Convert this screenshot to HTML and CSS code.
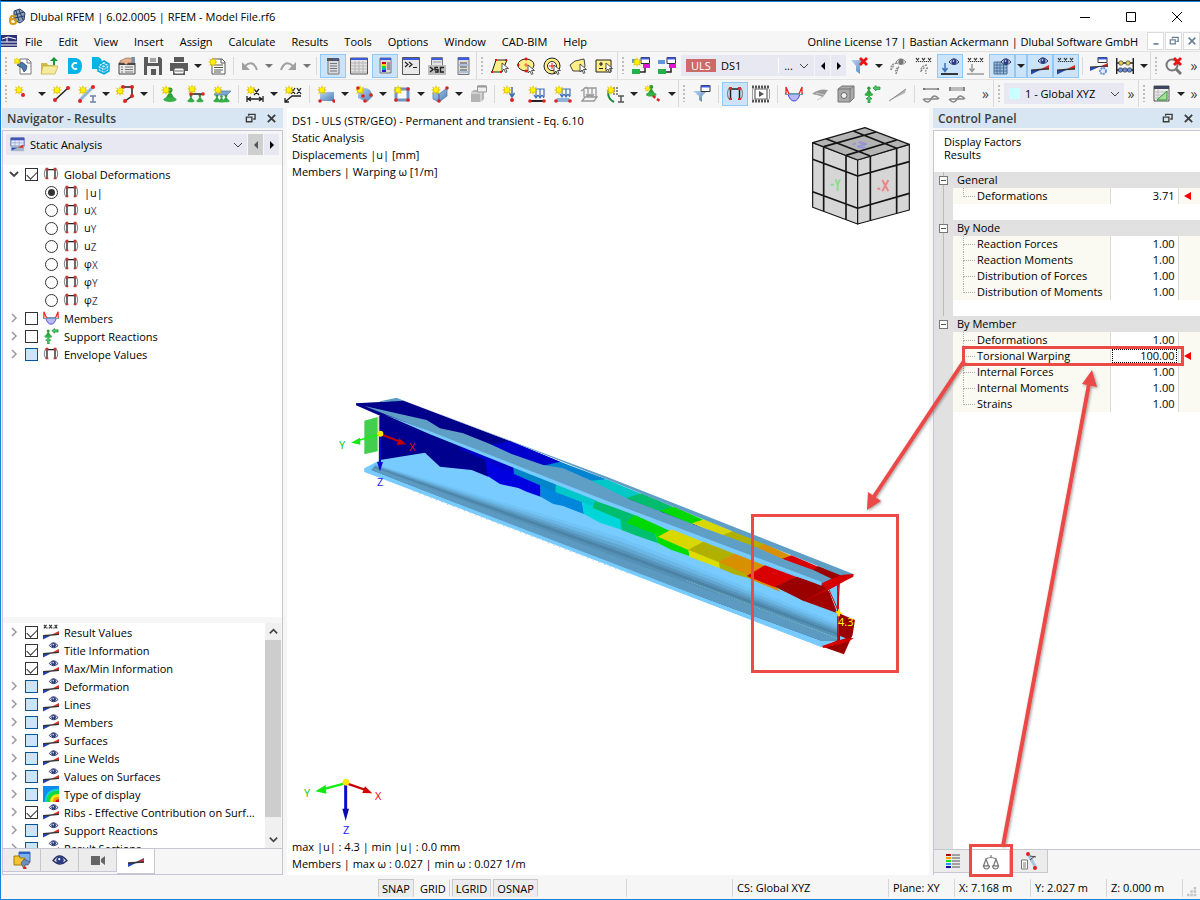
FILE: index.html
```html
<!DOCTYPE html>
<html lang="en">
<head>
    <meta charset="UTF-8">
    <meta name="viewport" content="width=device-width, initial-scale=1.0">
    <title>Dlubal RFEM | 6.02.0005 | RFEM - Model File.rf6</title>
    <link rel="stylesheet" href="styles.css">
</head>
<body>
    <!-- Icon sprite -->
    <svg class="sprite" aria-hidden="true">
        <defs>
            <linearGradient id="steel" x1="0" y1="0" x2="1" y2="1"><stop offset="0" stop-color="#b9d4f0"/><stop offset="1" stop-color="#4f7fb5"/></linearGradient>
            <g id="star"><path d="M5 0l1 3 3-1.500-1.500 2.500 2.500 1-2.500 1 1.500 3-3-1.500-1 2.500-1-2.500-3 1.500 1.500-3-2.500-1 2.500-1-1.500-2.500 3 1.500z" fill="#e2c100"/><circle cx="5" cy="5" r="2.400" fill="#fff200"/></g>
            <g id="cursor"><path d="M0 0v8l2-2 1.500 3.500 1.500-.7-1.500-3.300h3z" fill="#fff" stroke="#444" stroke-width=".9"/></g>
            <g id="eye"><path d="M0 4q4.500-6.500 10 0q-5 5-10 0z" fill="#dde1f2" stroke="#26305e" stroke-width="1"/><circle cx="5" cy="3.700" r="2.600" fill="#2a3a86"/><circle cx="4.500" cy="3" r=".8" fill="#fff"/></g>
            <g id="eyegray"><path d="M0 4q4.500-6.500 10 0q-5 5-10 0z" fill="#eee" stroke="#888" stroke-width="1"/><circle cx="5" cy="3.700" r="2.600" fill="#777"/></g>
            <g id="wedge"><path d="M0 13h9L0 17.500z" fill="#2446b8"/><path d="M9 12.500l9-4.500v4.500z" fill="#d93020"/><path d="M0 13.200l18-1.500" stroke="#333" stroke-width="1.500"/></g>
            <g id="xxx"><path d="M1 1l3 4M4 1l-3 4M7 1l3 4M10 1l-3 4M13 1l3 4M16 1l-3 4M5.500 4v1M11.500 4v1" stroke="#333" stroke-width="1.200"/></g>
            <g id="cone"><circle cx="9" cy="5" r="2.600" fill="#2f9d3c"/><path d="M9 6l5 8H4z" fill="#2f9d3c"/><ellipse cx="9" cy="14.500" rx="6.500" ry="2.500" fill="#37b048"/></g>
            <g id="redx"><path d="M0 0l7 7M7 0l-7 7" stroke="#ee1111" stroke-width="2.800"/></g>

            <symbol id="i-app" viewBox="0 0 18 18"><path d="M6 3l6-2 5 4-1 7-4 3-6-3z" fill="#8ba0bd" stroke="#273a5c"/><path d="M8 3l3 10M11 2l4 10M7 7l9-3M7 10l9-2" stroke="#273a5c"/><path d="M7 8H4q-2 1-2 5 0 3 3 3t3-2.500-3-2.500q-2 0-2.500 1.500" fill="none" stroke="#d79a10" stroke-width="2"/></symbol>
            <symbol id="i-mdi" viewBox="0 0 16 12"><path d="M0 0h16v12H0z" fill="#2c3177"/><path d="M0 7h16M1 4l6-2 8 2M6 2v5M0 10h16" stroke="#fff" fill="none" stroke-width="1"/></symbol>
            <symbol id="i-new" viewBox="0 0 18 18"><path d="M6 2h8l3 3v12H6z" fill="#fff" stroke="#777"/><path d="M13 2v4h4" fill="none" stroke="#777"/><path d="M3 8l5-3 5 4-1 4-2 2-2-4z" fill="#4c7aab" stroke="#1f3d63" stroke-width=".7"/><use href="#star" transform="translate(-1 0) scale(.8)"/></symbol>
            <symbol id="i-open" viewBox="0 0 18 18"><path d="M1 17V6h6l1 2h7v9z" fill="#d2bc48"/><path d="M1 17l2-8h15l-3 8z" fill="#f5eb9f" stroke="#c2ac42" stroke-width=".7"/><path d="M14 0l4 4h-3v4h-2V4h-3z" fill="#179a38"/></symbol>
            <symbol id="i-c" viewBox="0 0 18 18"><path d="M2 1h8q6 1 6 8t-6 8H2z" fill="#06b4e6"/><path d="M11 6.500A3 3 0 1 0 11 11.500" fill="none" stroke="#fff" stroke-width="1.800"/></symbol>
            <symbol id="i-c3" viewBox="0 0 18 18"><path d="M0 0h6q4 1 4 5v7H0z" fill="#06b4e6"/><path d="M12 4l5 3v7l-5 3-6-3V8z" fill="#c9f0fb" stroke="#06a8dc" stroke-width="1.500"/><path d="M6 8l6 3 5-4M12 11v6M8 6l6 3v7M9 16V9l6-3M6 11l6 3 5-3" stroke="#06a8dc" fill="none"/></symbol>
            <symbol id="i-props" viewBox="0 0 18 18"><path d="M1 6h16v11H1z" fill="#e8e8e8" stroke="#444"/><path d="M1 6h16v2H1z" fill="#444"/><path d="M3 10h2M7 10h8M3 12.500h2M7 12.500h8M3 15h2M7 15h8" stroke="#777"/><path d="M2 4l6-3 4 0 3 2-2 3-3 0-2 2-2-2-4 0z" fill="#e7b18f" stroke="#8a5a3a" stroke-width=".6"/><path d="M13 0h4v6h-3z" fill="#7b91ad"/></symbol>
            <symbol id="i-save" viewBox="0 0 18 18"><path d="M0 0h16l2 2v16H0z" fill="#5a5a5a"/><path d="M4 0h10v6H4z" fill="#f0f0f0"/><path d="M6 2h6M6 4h6" stroke="#5a5a5a"/><path d="M3 9h12v9H3z" fill="#f0f0f0"/><path d="M7 12h5v6H7z" fill="#5a5a5a"/></symbol>
            <symbol id="i-print" viewBox="0 0 18 18"><path d="M4 0h10v5H4zM0 6h18v8h-3v4H3v-4H0z" fill="#5a5a5a"/><path d="M3 5.500h12M5 12h8v4H5z" stroke="#fff" fill="#eee"/><path d="M5 14h8" stroke="#777"/></symbol>
            <symbol id="i-report" viewBox="0 0 18 18"><path d="M4 2h10l3 3v12H4z" fill="#fff" stroke="#555"/><path d="M13 2v4h4M6 8h9M6 10.500h9M6 13h9M6 15h7" stroke="#555" fill="none"/><use href="#star"/></symbol>
            <symbol id="i-undo" viewBox="0 0 18 18"><path d="M4 9Q12 2 16 13" fill="none" stroke="#a0a0a0" stroke-width="2"/><path d="M1 5v8h8z" fill="#a0a0a0"/></symbol>
            <symbol id="i-redo" viewBox="0 0 18 18"><path d="M14 9Q6 2 2 13" fill="none" stroke="#a0a0a0" stroke-width="2"/><path d="M17 5v8H9z" fill="#a0a0a0"/></symbol>
            <symbol id="i-nav" viewBox="0 0 18 18"><path d="M4 2h11v15H4z" fill="#d9dbe2" stroke="#777"/><path d="M3 1h12v3H3z" fill="#555"/><path d="M9 2h5" stroke="#3b5be0"/><path d="M6 6.500h7M6 9h7M6 11.500h7M6 14h7" stroke="#777"/></symbol>
            <symbol id="i-table" viewBox="0 0 18 18"><path d="M.5 1h17v16H.5z" fill="#e4e4e4" stroke="#555"/><path d="M1 1h16v2H1z" fill="#3b5be0"/><path d="M1 6h16M1 9h16M1 12h16M1 15h16M5 4v13M9 4v13M13 4v13" stroke="#b5b5b5"/></symbol>
            <symbol id="i-panel" viewBox="0 0 18 18"><path d="M4 1h11v15H4z" fill="#d9d9d9" stroke="#777"/><path d="M4 1h11v2H4z" fill="#3b5be0"/><path d="M6 5h4v2H6z" fill="#c00"/><path d="M6 7h4v2H6z" fill="#f2d200"/><path d="M6 9h4v2H6z" fill="#1d3"/><path d="M6 11h4v2H6z" fill="#0ad"/><path d="M6 13h4v2H6z" fill="#22b"/><path d="M11 6h3M11 8h3M11 10h3M11 12h3" stroke="#555"/></symbol>
            <symbol id="i-console" viewBox="0 0 18 18"><path d="M.5 .5h17v17H.5z" fill="#e9e9e9" stroke="#555"/><path d="M1 1h16v2H1z" fill="#3b5be0"/><path d="M3 5l3 2.500L3 10M7 5l3 2.500L7 10M11 10.500h4" fill="none" stroke="#222" stroke-width="1.200"/></symbol>
            <symbol id="i-script" viewBox="0 0 18 18"><path d="M3.500 .5h11v9h-11z" fill="#e4e4e4" stroke="#777"/><path d="M4 1h10v2H4z" fill="#3b5be0"/><path d="M5 5h8" stroke="#999"/><path d="M0 8h18v10H0z" fill="#bdbdbd"/><path d="M2 10l3 2.500L2 15M10 10.500H7v2.200h3V15H7M16 10.500h-3.500V15H16" fill="none" stroke="#222" stroke-width="1.400"/></symbol>
            <symbol id="i-list" viewBox="0 0 18 18"><path d="M4 .5h11v17H4z" fill="#ddd" stroke="#777"/><path d="M4 .5h11v2.500H4z" fill="#3b5be0"/><path d="M6 6h7M6 10h7M6 13h7" stroke="#444"/><path d="M5 7.500h9v1H5zM5 14.500h9v1H5z" fill="#7fa7d8"/></symbol>
            <symbol id="i-selrh" viewBox="0 0 18 18"><path d="M5 3h11l-5 12H1z" fill="#ffee83" stroke="#222"/><path d="M4 2h2v2H4zM14 2h2v2h-2zM0 14h2v2H0zM9 14h2v2H9z" fill="#e11"/><use href="#cursor" transform="translate(11 6)"/></symbol>
            <symbol id="i-selel" viewBox="0 0 18 18"><ellipse cx="9" cy="8" rx="8" ry="6" fill="#ffee83" stroke="#222"/><path d="M8 1h2v2H8zM0 7h2v2H0zM8 13h2v2H8zM9 6v4M7 8h4" fill="#e11" stroke="#e11" stroke-width=".6"/><use href="#cursor" transform="translate(11 8)"/></symbol>
            <symbol id="i-selring" viewBox="0 0 18 18"><circle cx="9" cy="9" r="8" fill="#ffee83" stroke="#222"/><circle cx="9" cy="9" r="4.500" fill="#fff" stroke="#222"/><path d="M9 6v6M6 9h6" stroke="#e11"/><use href="#cursor" transform="translate(11 8)"/></symbol>
            <symbol id="i-selpoly" viewBox="0 0 18 18"><path d="M1 8l5-4 9-2 1 7-2 5-10 0z" fill="#ffee83" stroke="#444"/><use href="#cursor" transform="translate(11 7)"/></symbol>
            <symbol id="i-selnum" viewBox="0 0 18 18"><path d="M1 3h15v12H1z" fill="#ffee83" stroke="#222"/><path d="M4 7h4M6 5v4M4 11.500h4M10 11.500h3" stroke="#222" stroke-width="1.200"/><use href="#cursor" transform="translate(11 6)"/></symbol>
            <symbol id="i-lcnew" viewBox="0 0 18 18"><path d="M9 .5h8.500v6H9z" fill="#fff" stroke="#333"/><path d="M9 .5h8.500v2H9z" fill="#3b5be0"/><path d="M11 7h7v4h-7z" fill="#e214d6"/><path d="M0 12h8v5H0z" fill="#22b24a"/><path d="M8 15h5v-4" fill="none" stroke="#222" stroke-width="1.500"/><path d="M0 2h6v4H0z" fill="#5f95e0"/><use href="#star"/></symbol>
            <symbol id="i-lc" viewBox="0 0 18 18"><path d="M0 3h7v4H0z" fill="#5f95e0"/><path d="M9 .5h8.500v6H9z" fill="#fff" stroke="#333"/><path d="M9 .5h8.500v2H9z" fill="#3b5be0"/><path d="M11 7h7v4h-7z" fill="#e214d6"/><path d="M0 12h8v5H0z" fill="#22b24a"/><path d="M8 15h5v-4" fill="none" stroke="#222" stroke-width="1.500"/></symbol>
            <symbol id="i-filterx" viewBox="0 0 18 18"><path d="M0 3h14l-5 6v8l-4-3V9z" fill="url(#steel)"/><use href="#redx" transform="translate(9 1)"/></symbol>
            <symbol id="i-arceye" viewBox="0 0 18 18"><path d="M8 6q-7 1-6 7M9 11q-3 0-2 6M2 13l3-5M7 17l3-8" stroke="#888" fill="none" stroke-width="1.300" stroke-dasharray="2 1"/><use href="#eyegray" transform="translate(7 1)"/></symbol>
            <symbol id="i-arcx" viewBox="0 0 18 18"><use href="#xxx"/><path d="M12 8q-7 1-6 7M13 11q-3 0-2 6M6 14l4-4" stroke="#888" fill="none" stroke-width="1.300" stroke-dasharray="2 1"/></symbol>
            <symbol id="i-loadeye" viewBox="0 0 18 18"><path d="M0 17h17" stroke="#222" stroke-width="1.800"/><path d="M4 6v8M1.500 11L4 14.500 6.500 11" stroke="#3e70b5" stroke-width="1.500" fill="none"/><use href="#eye" transform="translate(8 1)"/></symbol>
            <symbol id="i-loadx" viewBox="0 0 18 18"><use href="#xxx"/><path d="M0 17h17M5 7v7M2.500 11.500L5 14.500l2.500-3" stroke="#999" stroke-width="1.500" fill="none"/></symbol>
            <symbol id="i-grideye" viewBox="0 0 18 18"><path d="M1 5h13v12H1z" fill="#9dbfe0" stroke="#4a6f99"/><path d="M1 8h13M1 11h13M1 14h13M4 5v12M7 5v12M10.500 5v12" stroke="#4a6f99"/><use href="#eye" transform="translate(8 1)"/></symbol>
            <symbol id="i-reseye" viewBox="0 0 18 18"><use href="#wedge"/><use href="#eye" transform="translate(7 0)"/></symbol>
            <symbol id="i-resx" viewBox="0 0 18 18"><use href="#wedge"/><use href="#xxx"/></symbol>
            <symbol id="i-resgear" viewBox="0 0 18 18"><path d="M8 .5h9v5H8z" fill="#fff" stroke="#333"/><path d="M8 .5h9v2H8z" fill="#3b5be0"/><path d="M0 10h9l-9 4z" fill="#2446b8"/><path d="M9 10l9-4v4z" fill="#d93020"/><path d="M0 10l18-1" stroke="#333"/><circle cx="13" cy="14" r="3" fill="#e4ecfb" stroke="#6a8fda" stroke-width="2" stroke-dasharray="2 .8"/></symbol>
            <symbol id="i-abacus" viewBox="0 0 18 18"><path d="M.7 1v16M17.300 1v16M0 6h18M0 13h18" stroke="#222" stroke-width="1.500"/><circle cx="5" cy="6" r="2.200" fill="#e8cf56" stroke="#444" stroke-width=".7"/><circle cx="12" cy="6" r="2.200" fill="#e8cf56" stroke="#444" stroke-width=".7"/><circle cx="4.500" cy="13" r="2.200" fill="#6b90d8" stroke="#334" stroke-width=".7"/><circle cx="9" cy="13" r="2.200" fill="#6b90d8" stroke="#334" stroke-width=".7"/><circle cx="13.500" cy="13" r="2.200" fill="#6b90d8" stroke="#334" stroke-width=".7"/></symbol>
            <symbol id="i-zoomx" viewBox="0 0 18 18"><circle cx="7" cy="8" r="5.500" fill="none" stroke="#777" stroke-width="2"/><path d="M11 12l5 5" stroke="#777" stroke-width="3"/><use href="#redx" transform="translate(9 1)"/></symbol>

            <symbol id="i-node" viewBox="0 0 18 18"><use href="#star"/><circle cx="9" cy="10" r="2" fill="#d22"/></symbol>
            <symbol id="i-line" viewBox="0 0 18 18"><path d="M3 15L16 3" stroke="#222" stroke-width="1.500"/><circle cx="3" cy="15" r="2" fill="#d22"/><circle cx="16" cy="3" r="2" fill="#d22"/><use href="#star"/></symbol>
            <symbol id="i-member" viewBox="0 0 18 18"><path d="M2 15L15 2" stroke="#8fb4da" stroke-width="3"/><circle cx="2" cy="16" r="2" fill="#d22"/><circle cx="15" cy="2" r="2" fill="#d22"/><path d="M12 11h6M12 17h6M15 11v6" stroke="#6d83a8" stroke-width="1.500"/><use href="#star"/></symbol>
            <symbol id="i-poly" viewBox="0 0 18 18"><path d="M4 4l0 4M6 2h10v9l-7 5" fill="none" stroke="#222" stroke-width="1.500"/><circle cx="7" cy="2" r="2" fill="#d22"/><circle cx="16" cy="2" r="2" fill="#d22"/><circle cx="16" cy="11" r="2" fill="#d22"/><circle cx="9" cy="16" r="2" fill="#d22"/><use href="#star" transform="translate(-1 1)"/></symbol>
            <symbol id="i-nsup" viewBox="0 0 18 18"><use href="#cone"/><use href="#star"/></symbol>
            <symbol id="i-lsup" viewBox="0 0 18 18"><use href="#cone" transform="translate(-1 8) scale(.55)"/><use href="#cone" transform="translate(8 8) scale(.55)"/><path d="M3 9h13" stroke="#222" stroke-width="1.500"/><circle cx="4" cy="9" r="1.800" fill="#d22"/><circle cx="16" cy="9" r="1.800" fill="#d22"/><use href="#star" transform="translate(0 -1)"/></symbol>
            <symbol id="i-ssup" viewBox="0 0 18 18"><use href="#cone" transform="translate(-1 8) scale(.55)"/><use href="#cone" transform="translate(8 8) scale(.55)"/><use href="#cone" transform="translate(4 9) scale(.5)"/><path d="M4 6h14l-4 4H1z" fill="#7aa6d4" stroke="#4a78a9" stroke-width=".7"/><use href="#star"/></symbol>
            <symbol id="i-dim" viewBox="0 0 18 18"><path d="M1 11v6M17 11v6M2 14h14M5 12l-3 2 3 2M13 12l3 2-3 2M8 4l5 6M13 4l-5 6" fill="none" stroke="#222" stroke-width="1.300"/><use href="#star"/></symbol>
            <symbol id="i-dimxx" viewBox="0 0 18 18"><path d="M17 11H8l-7 6M1 13v4h4M7 3l4 6M11 3L7 9M13 3l4 6M17 3l-4 6" fill="none" stroke="#222" stroke-width="1.300"/><use href="#star"/></symbol>
            <symbol id="i-surf" viewBox="0 0 18 18"><path d="M3 7h14v9H3z" fill="url(#steel)"/><circle cx="3" cy="16" r="1.800" fill="#d22"/><circle cx="17" cy="16" r="1.800" fill="#d22"/><use href="#star"/></symbol>
            <symbol id="i-surf4" viewBox="0 0 18 18"><path d="M3 8q5-8 12-3l3 6-6 6-9-4z" fill="url(#steel)"/><use href="#star"/><circle cx="3" cy="3" r="1.800" fill="#d22"/><circle cx="16" cy="10" r="1.800" fill="#d22"/><circle cx="8" cy="11" r="1.800" fill="#d22"/><circle cx="10" cy="16" r="1.800" fill="#d22"/></symbol>
            <symbol id="i-opening" viewBox="0 0 18 18"><path d="M3 4h12v11H3z" fill="#fff" stroke="#7095c4" stroke-width="3"/><circle cx="3" cy="15" r="1.800" fill="#d22"/><circle cx="15" cy="15" r="1.800" fill="#d22"/><circle cx="15" cy="4" r="1.800" fill="#d22"/><use href="#star"/></symbol>
            <symbol id="i-solid" viewBox="0 0 18 18"><path d="M2 7l6 2v8l-6-3zM8 9l8-6v8l-8 6z" fill="url(#steel)" stroke="#48719f" stroke-width=".7"/><circle cx="16" cy="3" r="1.800" fill="#d22"/><circle cx="8" cy="16" r="1.800" fill="#d22"/><use href="#star"/></symbol>
            <symbol id="i-box" viewBox="0 0 18 18"><path d="M2 7l3-2h10v9l-3 3H2z" fill="#b4b4b4"/><path d="M2 8h10v9M12 8l3-3" fill="none" stroke="#eee"/><path d="M8.500 1h9v6h-9z" fill="#eee" stroke="#999"/><path d="M9 1.500h8" stroke="#999" stroke-width="2"/></symbol>
            <symbol id="i-nload" viewBox="0 0 18 18"><path d="M10 2v9M7.500 8l2.500 4 2.500-4" fill="none" stroke="#3e70b5" stroke-width="1.500"/><circle cx="10" cy="15" r="2" fill="#d22"/><use href="#star"/></symbol>
            <symbol id="i-mload" viewBox="0 0 18 18"><path d="M5 4h11v8M8 4v8M12 4v8M6 10l2 3 2-3M10 10l2 3 2-3M14 10l2 3" fill="none" stroke="#3e70b5" stroke-width="1.200"/><path d="M1 16h16" stroke="#222" stroke-width="2"/><circle cx="2" cy="16" r="1.800" fill="#d22"/><circle cx="16" cy="16" r="1.800" fill="#d22"/><use href="#star"/></symbol>
            <symbol id="i-sload" viewBox="0 0 18 18"><path d="M3 13h12l2 4H1z" fill="#8fb4da"/><path d="M5 4h11v7M8 4v7M12 4v7M6 9l2 3 2-3M10 9l2 3 2-3M14 9l2 3" fill="none" stroke="#3e70b5" stroke-width="1.200"/><circle cx="2" cy="16" r="1.800" fill="#d22"/><circle cx="16" cy="16" r="1.800" fill="#d22"/><use href="#star"/></symbol>
            <symbol id="i-gload" viewBox="0 0 18 18"><path d="M4 3h12v9M8 3v9M12 3v9M2 16l3-4h12l-3 4zM4 3v9M6 9l2 3 2-3M10 9l2 3 2-3M1 6l6-4" fill="none" stroke="#999" stroke-width="1.300"/></symbol>
            <symbol id="i-imp" viewBox="0 0 18 18"><path d="M3 4q-3 9 5 13" fill="none" stroke="#1c8a3a" stroke-width="2"/><path d="M8 2v9M11 2v9" stroke="#222" stroke-dasharray="2 1"/><path d="M12 11h6M12 17h6M15 11v6" stroke="#555" stroke-width="1.500"/><use href="#star"/></symbol>
            <symbol id="i-rsup" viewBox="0 0 18 18"><use href="#cone" transform="translate(0 -2) scale(.8)"/><path d="M9 11l8 6" stroke="#d22" stroke-width="2.500" stroke-dasharray="3 2"/><use href="#star" transform="scale(.7)"/></symbol>
            <symbol id="i-filterw" viewBox="0 0 18 18"><path d="M0 6h14l-5 5v6l-3-2v-4z" fill="url(#steel)"/><path d="M8 .5h9v6H8z" fill="#fff" stroke="#333"/><path d="M8 .5h9v2H8z" fill="#3b5be0"/></symbol>
            <symbol id="i-deform" viewBox="0 0 18 18"><path d="M4.500 14V4h9v10" fill="none" stroke="#222" stroke-width="1.500"/><path d="M3 3Q0 9 3 14M15 3Q18 9 15 14" fill="none" stroke="#888" stroke-width="1.200"/><path d="M3 2h3v3H3zM12 2h3v3h-3zM3 13h3v2H3zM12 13h3v2h-3z" fill="#c33"/></symbol>
            <symbol id="i-anim" viewBox="0 0 18 18"><path d="M0 2h18M0 16h18" stroke="#555" stroke-width="3" stroke-dasharray="2 1"/><path d="M0 4v10M18 4v10M3 4h12v10H3z" stroke="#666" fill="#fff" stroke-width="1.200"/><path d="M7 6l5 3-5 3z" fill="#555"/></symbol>
            <symbol id="i-forces" viewBox="0 0 18 18"><path d="M3 9h12q-2 7-6 7T3 9z" fill="#b9b9f4" stroke="#4444e0"/><path d="M0 9h18" stroke="#6c9cc0" stroke-width="2"/><path d="M1 9V2l3 7M17 9V2l-3 7" fill="#fff" stroke="#e22" stroke-width="1.300"/></symbol>
            <symbol id="i-sres" viewBox="0 0 18 18"><path d="M1 9q7-6 16-4l-5 7q-5-2-11-3z" fill="#999"/><path d="M5 8l8 2M12 12l-6 3" stroke="#ccc"/></symbol>
            <symbol id="i-dice" viewBox="0 0 18 18"><path d="M1 4l4-3h12v12l-4 4H1z" fill="#aaa" stroke="#777"/><path d="M1 4h12v13M13 4l4-3" fill="none" stroke="#777"/><circle cx="7" cy="10.500" r="3" fill="#eee" stroke="#666"/></symbol>
            <symbol id="i-react" viewBox="0 0 18 18"><use href="#cone" transform="scale(.65)"/><path d="M6 11l3 3H7v4H5v-4H3zM10 3l3-2.500V2h4v2.500h-4V6z" fill="#4bc964" stroke="#1c8a3a" stroke-width=".7"/></symbol>
            <symbol id="i-sect" viewBox="0 0 18 18"><path d="M0 16L17 4l-1 4z" fill="#b5b5b5"/><path d="M0 16L17 4" stroke="#888"/></symbol>
            <symbol id="i-rel1" viewBox="0 0 18 18"><path d="M2 4h14M2 14h14" stroke="#888" stroke-width="1.500"/><path d="M1 3h2v2H1zM15 3h2v2h-2z" fill="#777"/><path d="M1 14q5 6 8 0t8 0" fill="none" stroke="#888" stroke-width="1.500"/></symbol>
            <symbol id="i-rel2" viewBox="0 0 18 18"><path d="M2 4h14" stroke="#bbb" stroke-width="4"/><path d="M1 2h2v4H1zM15 2h2v4h-2z" fill="#888"/><path d="M1 14q5 6 8 0t8 0M2 14h14" fill="none" stroke="#888" stroke-width="1.500"/></symbol>
            <symbol id="i-tri" viewBox="0 0 18 18"><path d="M1 1h15v15H1z" fill="#eee" stroke="#555"/><path d="M1 1h15v3H1z" fill="#3c4660"/><path d="M1 7h15M1 10h15M1 13h15M5 4v12" stroke="#bbb"/><path d="M14 6v9H4z" fill="#a8dd9b" stroke="#2c9a37"/></symbol>
            <symbol id="i-analysis" viewBox="0 0 18 18"><path d="M1 1h16v10H1z" fill="#e8ecf8" stroke="#4555a5"/><path d="M1 1h16v3H1z" fill="#4257b5"/><path d="M1 7h16M6 4v7M11 4v7" stroke="#9aa8d8"/><path d="M1 11h16v6H1z" fill="#a5b9cb"/><path d="M2 16l7-3H2z" fill="#2446b8"/><path d="M9 13l7-4v4z" fill="#d93020"/></symbol>
            <symbol id="i-iso" viewBox="0 0 18 18"><path d="M0 0h18v18H0z" fill="#0a8cf0"/><path d="M2 18Q2 3 18 3v15z" fill="#0fd6d6"/><path d="M4 18Q4 5 18 5v13z" fill="#17d840"/><path d="M8 18q0-9 10-9v9z" fill="#f1ea10"/><path d="M11 18q0-6 7-6v6z" fill="#f79b10"/><path d="M14 18q0-3 4-3v3z" fill="#e01414"/></symbol>
            <symbol id="i-data" viewBox="0 0 18 18"><path d="M6 1h11v10H6z" fill="#7fb0ee" stroke="#3e68a8"/><path d="M6 1h11v2H6z" fill="#2d63c8"/><path d="M1 5h5l1 2h5v7H1z" fill="#f4c430" stroke="#a87908"/><path d="M8 12l3-4 6 3-2 3-3 0-1 4z" fill="#6a8fc0" stroke="#444" stroke-width=".6"/><circle cx="12" cy="17" r="1.500" fill="#d22"/></symbol>
            <symbol id="i-view" viewBox="0 0 18 18"><use href="#eye" transform="translate(2 4) scale(1.400)"/></symbol>
            <symbol id="i-cam" viewBox="0 0 18 18"><path d="M2 5h9v9H2zM12 8l4-3v9l-4-3z" fill="#666"/></symbol>
            <symbol id="i-wedge" viewBox="0 0 18 18"><path d="M1 11h8l-8 4zM9 10l8-4v4z" fill="#2446b8"/><path d="M9 10.500l8-4v4z" fill="#d93020"/><path d="M1 11l16-1" stroke="#333" stroke-width="1.500"/></symbol>
            <symbol id="i-legend" viewBox="0 0 18 18"><path d="M2 2h5v2H2z" fill="#b00000"/><path d="M2 5h5v2H2z" fill="#ff9d00"/><path d="M2 8h5v2H2z" fill="#1de21d"/><path d="M2 11h5v2H2z" fill="#1d9bf0"/><path d="M2 14h5v2H2z" fill="#0a0aa0"/><path d="M8 3h8M8 6h8M8 9h8M8 12h8M8 15h8" stroke="#555" stroke-width="1.200"/></symbol>
            <symbol id="i-scale" viewBox="0 0 18 18"><path d="M9 2v3M4 6q5-3 10 0M4 6l-2.500 7h5zM14 6l-2.500 7h5z" fill="none" stroke="#777" stroke-width="1.200"/><path d="M1.500 13h6q-.5 3-3 3t-3-3zM10.500 13h6q-.5 3-3 3t-3-3z" fill="#eee" stroke="#777" stroke-width="1.200"/></symbol>
            <symbol id="i-factor" viewBox="0 0 18 18"><path d="M8 2l8 14" stroke="#a9c5e6" stroke-width="3"/><circle cx="8" cy="2" r="2" fill="#d22"/><circle cx="15" cy="16" r="2" fill="#d22"/><path d="M1.500 8h6v9h-6z" fill="#fff" stroke="#777"/><path d="M3 11h3M3 13h3M3 15h3" stroke="#777"/><path d="M10 8l5-4M10 4l6 1" stroke="#444"/></symbol>
            <symbol id="i-restore" viewBox="0 0 12 12"><path d="M4 3V1.500h7v5H9" fill="none" stroke="currentColor" stroke-width="1.500"/><path d="M1.500 4.500h6v5h-6z" fill="none" stroke="currentColor" stroke-width="1.500"/></symbol>
            <symbol id="i-close" viewBox="0 0 12 12"><path d="M2 2l8 8M10 2l-8 8" stroke="currentColor" stroke-width="2"/></symbol>
            <symbol id="i-min" viewBox="0 0 12 12"><path d="M3 9.500h6" stroke="currentColor" stroke-width="2"/></symbol>
            <symbol id="i-chev" viewBox="0 0 12 12"><path d="M2 4l4 4 4-4" fill="none" stroke="currentColor"/></symbol>
            <symbol id="i-twist" viewBox="0 0 12 12"><path d="M4 2l4 4-4 4" fill="none" stroke="#9a9a9a" stroke-width="1.500"/></symbol>
            <symbol id="i-twistopen" viewBox="0 0 12 12"><path d="M2 4l4 4 4-4" fill="none" stroke="#444" stroke-width="1.800"/></symbol>
        </defs>
    </svg>

    <header class="titlebar">
        <svg class="ico"><use href="#i-app"/></svg>
        <span class="title">Dlubal RFEM | 6.02.0005 | RFEM - Model File.rf6</span>
        <button class="win-btn" aria-label="Minimize"><svg viewBox="0 0 12 12"><path d="M1 6.500h10" stroke="#000"/></svg></button>
        <button class="win-btn" aria-label="Maximize"><svg viewBox="0 0 12 12"><path d="M1.500 1.500h9v9h-9z" fill="none" stroke="#000"/></svg></button>
        <button class="win-btn" aria-label="Close"><svg viewBox="0 0 12 12"><path d="M1 1l10 10M11 1L1 11" stroke="#000"/></svg></button>
    </header>

    <nav class="menubar">
        <svg class="mdi"><use href="#i-mdi"/></svg>
        <button>File</button>
        <button>Edit</button>
        <button>View</button>
        <button>Insert</button>
        <button>Assign</button>
        <button>Calculate</button>
        <button>Results</button>
        <button>Tools</button>
        <button>Options</button>
        <button>Window</button>
        <button>CAD-BIM</button>
        <button>Help</button>
        <span class="license">Online License 17 | Bastian Ackermann | Dlubal Software GmbH</span>
        <button class="mdi-btn" aria-label="Minimize document"><svg><use href="#i-min"/></svg></button>
        <button class="mdi-btn" aria-label="Restore document"><svg><use href="#i-restore"/></svg></button>
        <button class="mdi-btn" aria-label="Close document"><svg><use href="#i-close"/></svg></button>
    </nav>

    <div class="toolbar">
        <span class="grip first"></span>
        <button class="tb"><svg class="ico"><use href="#i-new"/></svg></button>
        <button class="tb"><svg class="ico"><use href="#i-open"/></svg></button>
        <button class="tb"><svg class="ico"><use href="#i-c"/></svg></button>
        <button class="tb"><svg class="ico"><use href="#i-c3"/></svg></button>
        <button class="tb"><svg class="ico"><use href="#i-props"/></svg></button>
        <button class="tb"><svg class="ico"><use href="#i-save"/></svg></button>
        <button class="tb"><svg class="ico"><use href="#i-print"/></svg></button>
        <button class="drop"></button>
        <button class="tb"><svg class="ico"><use href="#i-report"/></svg></button>
        <span class="sep"></span>
        <button class="tb"><svg class="ico"><use href="#i-undo"/></svg></button>
        <button class="drop off"></button>
        <button class="tb"><svg class="ico"><use href="#i-redo"/></svg></button>
        <button class="drop off"></button>
        <span class="sep"></span>
        <button class="tb on"><svg class="ico"><use href="#i-nav"/></svg></button>
        <button class="tb"><svg class="ico"><use href="#i-table"/></svg></button>
        <button class="tb on"><svg class="ico"><use href="#i-panel"/></svg></button>
        <button class="tb"><svg class="ico"><use href="#i-console"/></svg></button>
        <button class="tb"><svg class="ico"><use href="#i-script"/></svg></button>
        <button class="tb"><svg class="ico"><use href="#i-list"/></svg></button>
        <span class="grip"></span>
        <button class="tb"><svg class="ico"><use href="#i-selrh"/></svg></button>
        <button class="tb"><svg class="ico"><use href="#i-selel"/></svg></button>
        <button class="tb"><svg class="ico"><use href="#i-selring"/></svg></button>
        <button class="tb"><svg class="ico"><use href="#i-selpoly"/></svg></button>
        <button class="tb"><svg class="ico"><use href="#i-selnum"/></svg></button>
        <span class="grip"></span>
        <button class="tb"><svg class="ico"><use href="#i-lcnew"/></svg></button>
        <button class="tb"><svg class="ico"><use href="#i-lc"/></svg></button>
        <div class="combo combo-ds">
            <span class="badge">ULS</span>
            <select aria-label="Design situation"><option>DS1</option></select>
            <button class="more">...</button>
            <svg class="chev"><use href="#i-chev"/></svg>
        </div>
        <button class="step" aria-label="Previous"><svg viewBox="0 0 12 12"><path d="M8 2v8L4 6z"/></svg></button>
        <button class="step" aria-label="Next"><svg viewBox="0 0 12 12"><path d="M4 2v8l4-4z"/></svg></button>
        <button class="tb"><svg class="ico"><use href="#i-filterx"/></svg></button>
        <button class="drop"></button>
        <button class="tb"><svg class="ico"><use href="#i-arceye"/></svg></button>
        <button class="tb"><svg class="ico"><use href="#i-arcx"/></svg></button>
        <button class="tb on"><svg class="ico"><use href="#i-loadeye"/></svg></button>
        <button class="tb"><svg class="ico"><use href="#i-loadx"/></svg></button>
        <button class="tb on"><svg class="ico"><use href="#i-grideye"/></svg></button>
        <button class="drop on"></button>
        <button class="tb on"><svg class="ico"><use href="#i-reseye"/></svg></button>
        <button class="tb on"><svg class="ico"><use href="#i-resx"/></svg></button>
        <span class="sep"></span>
        <button class="tb"><svg class="ico"><use href="#i-resgear"/></svg></button>
        <button class="tb"><svg class="ico"><use href="#i-abacus"/></svg></button>
        <button class="drop"></button>
        <span class="grip"></span>
        <button class="tb"><svg class="ico"><use href="#i-zoomx"/></svg></button>
        <button class="overflow">»</button>
    </div>

    <div class="toolbar">
        <span class="grip first"></span>
        <button class="tb"><svg class="ico"><use href="#i-node"/></svg></button>
        <button class="drop"></button>
        <button class="tb"><svg class="ico"><use href="#i-line"/></svg></button>
        <button class="tb"><svg class="ico"><use href="#i-member"/></svg></button>
        <button class="drop"></button>
        <button class="tb"><svg class="ico"><use href="#i-poly"/></svg></button>
        <button class="drop"></button>
        <span class="sep"></span>
        <button class="tb"><svg class="ico"><use href="#i-nsup"/></svg></button>
        <button class="tb"><svg class="ico"><use href="#i-lsup"/></svg></button>
        <button class="tb"><svg class="ico"><use href="#i-ssup"/></svg></button>
        <span class="sep"></span>
        <button class="tb"><svg class="ico"><use href="#i-dim"/></svg></button>
        <button class="drop"></button>
        <button class="tb"><svg class="ico"><use href="#i-dimxx"/></svg></button>
        <span class="sep"></span>
        <button class="tb"><svg class="ico"><use href="#i-surf"/></svg></button>
        <button class="drop"></button>
        <button class="tb"><svg class="ico"><use href="#i-surf4"/></svg></button>
        <button class="drop"></button>
        <button class="tb"><svg class="ico"><use href="#i-opening"/></svg></button>
        <button class="drop"></button>
        <button class="tb"><svg class="ico"><use href="#i-solid"/></svg></button>
        <button class="drop"></button>
        <button class="tb"><svg class="ico"><use href="#i-box"/></svg></button>
        <span class="sep"></span>
        <button class="tb"><svg class="ico"><use href="#i-nload"/></svg></button>
        <button class="tb"><svg class="ico"><use href="#i-mload"/></svg></button>
        <button class="tb"><svg class="ico"><use href="#i-sload"/></svg></button>
        <button class="tb"><svg class="ico"><use href="#i-gload"/></svg></button>
        <button class="tb"><svg class="ico"><use href="#i-imp"/></svg></button>
        <button class="drop"></button>
        <button class="tb"><svg class="ico"><use href="#i-rsup"/></svg></button>
        <button class="drop"></button>
        <span class="grip"></span>
        <button class="tb"><svg class="ico"><use href="#i-filterw"/></svg></button>
        <span class="sep"></span>
        <button class="tb on"><svg class="ico"><use href="#i-deform"/></svg></button>
        <button class="tb"><svg class="ico"><use href="#i-anim"/></svg></button>
        <span class="sep"></span>
        <button class="tb"><svg class="ico"><use href="#i-forces"/></svg></button>
        <button class="tb"><svg class="ico"><use href="#i-sres"/></svg></button>
        <button class="tb"><svg class="ico"><use href="#i-dice"/></svg></button>
        <button class="tb"><svg class="ico"><use href="#i-react"/></svg></button>
        <button class="tb"><svg class="ico"><use href="#i-sect"/></svg></button>
        <span class="sep"></span>
        <button class="tb"><svg class="ico"><use href="#i-rel1"/></svg></button>
        <button class="tb"><svg class="ico"><use href="#i-rel2"/></svg></button>
        <button class="overflow wide">»</button>
        <span class="grip"></span>
        <div class="combo combo-cs">
            <span class="swatch"></span>
            <select aria-label="Coordinate system"><option>1 - Global XYZ</option></select>
            <svg class="chev"><use href="#i-chev"/></svg>
        </div>
        <button class="overflow">»</button>
        <span class="grip"></span>
        <button class="tb"><svg class="ico"><use href="#i-tri"/></svg></button>
        <button class="drop"></button>
        <button class="overflow">»</button>
    </div>

    <main class="workspace">
        <aside class="navigator">
            <div class="panel-head">
                <h2>Navigator - Results</h2>
                <button aria-label="Undock navigator"><svg><use href="#i-restore"/></svg></button>
                <button aria-label="Close navigator"><svg><use href="#i-close"/></svg></button>
            </div>
            <div class="nav-box">
                <div class="nav-select">
                    <div class="combo combo-nav">
                        <svg class="ico"><use href="#i-analysis"/></svg>
                        <select aria-label="Analysis type"><option>Static Analysis</option></select>
                        <svg class="chev"><use href="#i-chev"/></svg>
                    </div>
                    <button class="step dim" aria-label="Previous analysis"><svg viewBox="0 0 12 12"><path d="M8 2v8L4 6z" fill="#555"/></svg></button>
                    <button class="step" aria-label="Next analysis"><svg viewBox="0 0 12 12"><path d="M4 2v8l4-4z"/></svg></button>
                </div>
                <div class="tree tree-main">
                    <label class="row"><svg class="tw"><use href="#i-twistopen"/></svg><input type="checkbox" checked><svg class="ico16"><use href="#i-deform"/></svg><span>Global Deformations</span></label>
                    <label class="row sub"><input type="radio" name="def" checked><svg class="ico16"><use href="#i-deform"/></svg><span>|u|</span></label>
                    <label class="row sub"><input type="radio" name="def"><svg class="ico16"><use href="#i-deform"/></svg><span>u<small>X</small></span></label>
                    <label class="row sub"><input type="radio" name="def"><svg class="ico16"><use href="#i-deform"/></svg><span>u<small>Y</small></span></label>
                    <label class="row sub"><input type="radio" name="def"><svg class="ico16"><use href="#i-deform"/></svg><span>u<small>Z</small></span></label>
                    <label class="row sub"><input type="radio" name="def"><svg class="ico16"><use href="#i-deform"/></svg><span>φ<small>X</small></span></label>
                    <label class="row sub"><input type="radio" name="def"><svg class="ico16"><use href="#i-deform"/></svg><span>φ<small>Y</small></span></label>
                    <label class="row sub"><input type="radio" name="def"><svg class="ico16"><use href="#i-deform"/></svg><span>φ<small>Z</small></span></label>
                    <label class="row"><svg class="tw"><use href="#i-twist"/></svg><input type="checkbox"><svg class="ico16"><use href="#i-forces"/></svg><span>Members</span></label>
                    <label class="row"><svg class="tw"><use href="#i-twist"/></svg><input type="checkbox"><svg class="ico16"><use href="#i-react"/></svg><span>Support Reactions</span></label>
                    <label class="row"><svg class="tw"><use href="#i-twist"/></svg><input type="checkbox" class="part"><svg class="ico16"><use href="#i-deform"/></svg><span>Envelope Values</span></label>
                </div>
                <div class="tree-options">
                    <div class="tree">
                        <label class="row"><svg class="tw"><use href="#i-twist"/></svg><input type="checkbox" checked><svg class="ico16"><use href="#i-resx"/></svg><span>Result Values</span></label>
                        <label class="row"><span class="tw"></span><input type="checkbox" checked><svg class="ico16"><use href="#i-reseye"/></svg><span>Title Information</span></label>
                        <label class="row"><span class="tw"></span><input type="checkbox" checked><svg class="ico16"><use href="#i-reseye"/></svg><span>Max/Min Information</span></label>
                        <label class="row"><svg class="tw"><use href="#i-twist"/></svg><input type="checkbox" class="part"><svg class="ico16"><use href="#i-reseye"/></svg><span>Deformation</span></label>
                        <label class="row"><svg class="tw"><use href="#i-twist"/></svg><input type="checkbox" class="part"><svg class="ico16"><use href="#i-reseye"/></svg><span>Lines</span></label>
                        <label class="row"><svg class="tw"><use href="#i-twist"/></svg><input type="checkbox" class="part"><svg class="ico16"><use href="#i-reseye"/></svg><span>Members</span></label>
                        <label class="row"><svg class="tw"><use href="#i-twist"/></svg><input type="checkbox" class="part"><svg class="ico16"><use href="#i-reseye"/></svg><span>Surfaces</span></label>
                        <label class="row"><svg class="tw"><use href="#i-twist"/></svg><input type="checkbox" class="part"><svg class="ico16"><use href="#i-reseye"/></svg><span>Line Welds</span></label>
                        <label class="row"><svg class="tw"><use href="#i-twist"/></svg><input type="checkbox" class="part"><svg class="ico16"><use href="#i-reseye"/></svg><span>Values on Surfaces</span></label>
                        <label class="row"><svg class="tw"><use href="#i-twist"/></svg><input type="checkbox" class="part"><svg class="ico16"><use href="#i-iso"/></svg><span>Type of display</span></label>
                        <label class="row"><svg class="tw"><use href="#i-twist"/></svg><input type="checkbox" checked><svg class="ico16"><use href="#i-reseye"/></svg><span>Ribs - Effective Contribution on Surf...</span></label>
                        <label class="row"><svg class="tw"><use href="#i-twist"/></svg><input type="checkbox" class="part"><svg class="ico16"><use href="#i-reseye"/></svg><span>Support Reactions</span></label>
                        <label class="row"><svg class="tw"><use href="#i-twist"/></svg><input type="checkbox" class="part"><svg class="ico16"><use href="#i-reseye"/></svg><span>Result Sections</span></label>
                    </div>
                    <div class="scrollbar">
                        <button aria-label="Scroll up"><svg viewBox="0 0 12 12"><path d="M2 8l4-4 4 4" fill="none" stroke="#444" stroke-width="1.800"/></svg></button>
                        <div class="thumb"></div>
                        <button aria-label="Scroll down"><svg viewBox="0 0 12 12"><path d="M2 4l4 4 4-4" fill="none" stroke="#444" stroke-width="1.800"/></svg></button>
                    </div>
                </div>
                <div class="tabs">
                    <button class="tab" aria-label="Data"><svg class="ico"><use href="#i-data"/></svg></button>
                    <button class="tab" aria-label="Display"><svg class="ico"><use href="#i-view"/></svg></button>
                    <button class="tab" aria-label="Views"><svg class="ico"><use href="#i-cam"/></svg></button>
                    <button class="tab active" aria-label="Results"><svg class="ico"><use href="#i-wedge"/></svg></button>
                </div>
            </div>
        </aside>

        <section class="viewport">
            <div class="info">
                DS1 - ULS (STR/GEO) - Permanent and transient - Eq. 6.10<br>
                Static Analysis<br>
                Displacements |u| [mm]<br>
                Members | Warping ω [1/m]
            </div>
            <svg class="scene" viewBox="287 108 642 767">
                <!-- Navigation cube -->
                <g transform="translate(790 110) scale(.3333)" stroke="#151515" stroke-width="3.500" stroke-linejoin="round">
                    <path d="M68 98L203 150V342L68 292z" fill="#d6d6d6"/>
                    <path d="M203 150L358 103V300L203 342z" fill="#d6d6d6"/>
                    <path d="M68 98L225 53 358 103 203 150z" fill="#b4b4b4"/>
                    <path d="M101 110V304M168 136V329M241 138V331M320 115V310M68 148L203 198 358 155M68 245L203 295 358 250M101 110L258 66M168 136L320 90M241 138L108 86M320 115L190 63" fill="none" stroke-width="5"/>
                    <g fill="none" stroke-width="6">
                        <path d="M122 224h10M137 208l6 16 7-16M143 224v18" stroke="#8fdc8f"/>
                        <path d="M262 236h9M277 210l18 34M295 210l-18 34" stroke="#ee8585"/>
                        <path d="M188 104l10-4M206 96l22 6-24 8 22 4" stroke="#9494d8"/>
                    </g>
                </g>

                <!-- Beam with warping contours -->
                <g transform="translate(330 380) scale(.3333)">
                    <path d="M103 265L150 240 150 105 1475 610 1525 690V780L1475 800 103 272z" fill="#77cbff"/>
                    <!-- fillet shading, darkest where web meets flange -->
                    <path d="M135 252L870 472 1525 730V782H1475L870 562 125 270z" fill="#72c3f6"/>
                    <path d="M135 254L870 484 1525 738V782H1475L870 562 125 270z" fill="#6bb6e5"/>
                    <path d="M135 256L870 496 1525 746V782H1475L870 562 125 270z" fill="#61a6d1"/>
                    <path d="M135 258L870 506 1525 753V782H1475L870 562 125 270z" fill="#5694bb"/>
                    <path d="M135 260L870 515 1525 760V782H1475L870 562 125 270z" fill="#4c83a6"/>
                    <path d="M135 262L870 525 1525 766V782H1475L870 562 125 270z" fill="#5590b5"/>
                    <path d="M135 264L870 535 1525 773V782H1475L870 562 125 270z" fill="#5c9ac1"/>
                    <path d="M103 264L870 558 1475 790V802L870 569 103 276z" fill="#77cbff"/>
                    <path d="M250 334L900 583" stroke="#3a63b8" stroke-width="1" stroke-dasharray="4 14" fill="none"/>
                    <path d="M1070 602L1525 776" stroke="#a8f0cf" stroke-width="2" stroke-dasharray="4 4" opacity=".7"/>
                    <!-- web -->
                    <path d="M150 105L470 235 475 290 425 270 330 260 285 218 150 240z" fill="#00008f"/>
                    <path d="M465 232L632 305 632 350 590 335 565 324 510 312 473 288z" fill="#0000e0"/>
                    <path d="M630 300L755 360 762 402 730 390 700 378 670 372 632 350z" fill="#0086dc"/>
                    <path d="M755 355L872 410 877 450 810 428 762 402z" fill="#00d6da"/>
                    <path d="M870 405L975 460 985 490 920 467 875 450z" fill="#00c070"/>
                    <path d="M975 460L1075 505 1078 528 1025 510 985 490z" fill="#00dd00"/>
                    <path d="M1075 505L1165 540 1170 565 1130 550 1078 530z" fill="#dddd00"/>
                    <path d="M1165 540L1255 580 1265 597 1210 582 1170 565z" fill="#b0b000"/>
                    <path d="M1250 580L1335 615 1350 635 1260 597z" fill="#e08a00"/>
                    <path d="M1335 615L1475 600 1500 640 1522 700 1490 688 1420 662z" fill="#a00000"/>
                    <!-- lower half of top flange -->
                    <path d="M150 100L400 195 470 240 400 215z" fill="#00008a"/>
                    <path d="M390 195L550 260 560 280 520 268 470 242 390 208z" fill="#0000c8"/>
                    <path d="M550 262L680 310 700 346 630 316 552 282z" fill="#0086c8"/>
                    <path d="M678 310L800 360 795 380 770 372 676 336z" fill="#00c8c8"/>
                    <path d="M795 362L930 408 895 428 870 418 788 384z" fill="#00bd6e"/>
                    <path d="M915 405L1025 455 990 468 888 428z" fill="#00d800"/>
                    <path d="M1025 448L1120 486 1075 510 984 470z" fill="#d8d800"/>
                    <path d="M1120 485L1215 522 1165 546 1075 509z" fill="#b0b000"/>
                    <path d="M1215 521L1305 557 1255 586 1165 545z" fill="#d89000"/>
                    <path d="M1305 556L1400 591 1335 622 1250 588z" fill="#d80000"/>
                    <path d="M1400 590L1480 616 1470 640 1420 662 1335 620z" fill="#9a0000"/>
                    <!-- top flange -->
                    <path d="M78 70L150 66 215 60 540 183 690 245 1475 610 1400 588 150 107 78 76z" fill="#00008a"/>
                    <path d="M140 66L200 53 222 62z" fill="#5b9cc4"/>
                    <path d="M540 183L690 245 640 260 545 226 480 195z" fill="#0000cc"/>
                    <path d="M690 245L830 298 790 308 640 257z" fill="#0083d0"/>
                    <path d="M830 298L935 342 890 360 780 302z" fill="#00c8c8"/>
                    <path d="M935 340L1032 382 990 396 888 354z" fill="#00bd6e"/>
                    <path d="M1032 380L1122 420 1088 434 988 392z" fill="#00d800"/>
                    <path d="M1122 418L1210 455 1180 468 1086 430z" fill="#d8d800"/>
                    <path d="M1210 453L1305 492 1280 506 1178 465z" fill="#b0b000"/>
                    <path d="M1305 491L1385 528 1358 540 1278 503z" fill="#d89000"/>
                    <path d="M1385 526L1465 560 1450 574 1356 537z" fill="#d80000"/>
                    <path d="M1465 558L1540 586 1510 605 1448 571z" fill="#9a0000"/>
                    <path d="M103 78L290 120 330 145 400 160 480 192 545 222 640 255 700 265 780 300 890 355 990 394 1088 432 1180 465 1280 502 1358 537 1450 570 1505 596 1480 614 810 358 300 155z" fill="#5f9fc6"/>
                    <path d="M160 102L300 154 810 355 1475 606V617L810 366 300 163z" fill="#77cbff"/>
                    <path d="M222 62L830 290 1572 583 1560 590 1535 587 1210 455 830 298 540 183z" fill="#5f9fc6"/>
                    <!-- free end -->
                    <path d="M1495 625L1528 612 1524 690z" fill="#77cbff" stroke="#c00000" stroke-width="3"/>
                    <path d="M1475 610L1510 594 1540 584 1571 582 1570 590 1545 603 1500 628 1420 662 1490 628z" fill="#d40000"/>
                    <path d="M1527 700L1575 720 1568 765 1542 823 1478 800 1525 780z" fill="#9a0000"/>
                    <path d="M1476 798L1530 780 1572 773 1560 782 1530 792 1480 804z" fill="#d40000"/>
                    <path d="M1530 768L1548 775 1530 780z" fill="#77cbff"/>
                    <path d="M1524 612V785" stroke="#cc0000" stroke-width="5"/>
                    <path d="M1516 694h8v-6h6v8l10 4-10 3v6h-8v-6z" fill="#ffe000"/>
                    <!-- support and local axes -->
                    <path d="M103 122L143 111V214L103 223z" fill="#42cf4e"/>
                    <path d="M148 108V245" stroke="#173e17" stroke-width="3"/>
                    <path d="M150 165V250" stroke="#0d0dc8" stroke-width="6"/><path d="M141 246h18l-9 28z" fill="#0d0dc8"/>
                    <path d="M150 162L80 183" stroke="#12f012" stroke-width="5"/><path d="M90 173l-27 15 28 6z" fill="#12e812"/>
                    <path d="M150 162L208 184" stroke="#c40000" stroke-width="6"/><path d="M208 175l20 18-28 2z" fill="#c40000"/>
                    <circle cx="151" cy="161" r="9" fill="#ffe600"/>
                </g>
                <g class="axis-text">
                    <text x="339" y="449" fill="#0c0">Y</text>
                    <text x="409" y="451" fill="#e00">X</text>
                    <text x="377" y="486" fill="#22e">Z</text>
                    <text x="838" y="626" fill="#ff0">4.3</text>
                    <text x="304" y="797" fill="#0c0">Y</text>
                    <text x="375" y="800" fill="#e00">X</text>
                    <text x="343" y="834" fill="#22e">Z</text>
                </g>

                <!-- Global axes -->
                <g transform="translate(285 770) scale(.3333)">
                    <path d="M182 45V120" stroke="#0d0dc8" stroke-width="9"/><path d="M172 116h20l-10 36z" fill="#0a0ab0"/>
                    <path d="M180 40L118 57" stroke="#12f012" stroke-width="7"/><path d="M122 45l-31 19 33 7z" fill="#12e812"/>
                    <path d="M185 40L242 60" stroke="#c40000" stroke-width="7"/><path d="M240 49l22 21-30-1z" fill="#d40000"/>
                    <circle cx="183" cy="37" r="10" fill="#ffe600"/>
                </g>
            </svg>
            <div class="extremes">
                max |u| : 4.3 | min |u| : 0.0 mm<br>
                Members | max ω : 0.027 | min ω : 0.027 1/m
            </div>
        </section>

        <aside class="control">
            <div class="panel-head">
                <h2>Control Panel</h2>
                <button aria-label="Undock control panel"><svg><use href="#i-restore"/></svg></button>
                <button aria-label="Close control panel"><svg><use href="#i-close"/></svg></button>
            </div>
            <div class="control-box">
                <p class="control-title">Display Factors<br>Results</p>
                <div class="factors">
                    <table>
                        <colgroup><col class="c-gut"><col class="c-name"><col class="c-val"><col></colgroup>
                        <tr class="group"><td class="gut"><span class="minus"></span></td><th colspan="3">General</th></tr>
                        <tr><td class="gut"></td><td class="name last">Deformations</td><td class="val">3.71</td><td class="mark"><i></i></td></tr>
                        <tr class="gap"><td class="gut"></td><td colspan="3"></td></tr>
                        <tr class="group"><td class="gut"><span class="minus"></span></td><th colspan="3">By Node</th></tr>
                        <tr><td class="gut"></td><td class="name">Reaction Forces</td><td class="val">1.00</td><td class="mark"></td></tr>
                        <tr><td class="gut"></td><td class="name">Reaction Moments</td><td class="val">1.00</td><td class="mark"></td></tr>
                        <tr><td class="gut"></td><td class="name">Distribution of Forces</td><td class="val">1.00</td><td class="mark"></td></tr>
                        <tr><td class="gut"></td><td class="name last">Distribution of Moments</td><td class="val">1.00</td><td class="mark"></td></tr>
                        <tr class="gap"><td class="gut"></td><td colspan="3"></td></tr>
                        <tr class="group"><td class="gut end"><span class="minus"></span></td><th colspan="3">By Member</th></tr>
                        <tr><td class="gut end"></td><td class="name">Deformations</td><td class="val">1.00</td><td class="mark"></td></tr>
                        <tr><td class="gut end"></td><td class="name"><label for="warp">Torsional Warping</label></td><td class="val edit"><input id="warp" type="text" value="100.00"></td><td class="mark"><i></i></td></tr>
                        <tr><td class="gut end"></td><td class="name">Internal Forces</td><td class="val">1.00</td><td class="mark"></td></tr>
                        <tr><td class="gut end"></td><td class="name">Internal Moments</td><td class="val">1.00</td><td class="mark"></td></tr>
                        <tr><td class="gut end"></td><td class="name last">Strains</td><td class="val">1.00</td><td class="mark"></td></tr>
                    </table>
                </div>
                <div class="tabs">
                    <button class="tab" aria-label="Color scale"><svg class="ico"><use href="#i-legend"/></svg></button>
                    <button class="tab active" aria-label="Display factors"><svg class="ico"><use href="#i-scale"/></svg></button>
                    <button class="tab" aria-label="Filter"><svg class="ico"><use href="#i-factor"/></svg></button>
                </div>
            </div>
        </aside>

        <!-- Callouts -->
        <svg class="callouts" viewBox="750 108 450 792">
            <defs><filter id="soft" x="-20%" y="-20%" width="140%" height="140%"><feDropShadow dx="1" dy="1" stdDeviation="1.500" flood-opacity=".4"/></filter></defs>
            <g filter="url(#soft)">
                <path d="M964 361L873 498" stroke="#eb4a46" stroke-width="4"/>
                <path d="M867 510l1-18 13 9z" fill="#eb4a46"/>
                <path d="M1003 846L1089 384" stroke="#eb4a46" stroke-width="4"/>
                <path d="M1092 370l5 17-15-3z" fill="#eb4a46"/>
            </g>
            <g fill="none" stroke="#eb4a46" stroke-width="3">
                <rect x="752.5" y="515.5" width="145" height="156"/>
                <rect x="963.5" y="347.500" width="219" height="17"/>
                <rect x="970.5" y="845.500" width="41" height="30"/>
            </g>
        </svg>
    </main>

    <footer class="status">
        <div class="snaps">
            <button class="in">SNAP</button>
            <button>GRID</button>
            <button class="in">LGRID</button>
            <button class="in">OSNAP</button>
        </div>
        <span class="cell grow"></span>
        <span class="cell blank"></span>
        <span class="cell cs">CS: Global XYZ</span>
        <span class="cell plane">Plane: XY</span>
        <span class="cell">X: 7.168 m</span>
        <span class="cell">Y: 2.027 m</span>
        <span class="cell">Z: 0.000 m</span>
        <span class="cell size"><svg viewBox="0 0 12 12"><path d="M8 0h3v3H8zM4 4h3v3H4zM8 4h3v3H8zM0 8h3v3H0zM4 8h3v3H4zM8 8h3v3H8z" fill="#c4c4c4"/></svg></span>
    </footer>
</body>
</html>
```
FILE: styles.css
```css
* {
    box-sizing: border-box;
}
body {
    margin: 0;
    height: 100vh;
    display: flex;
    flex-direction: column;
    overflow: hidden;
    background: #f6f6f6;
    border-top: 1px solid #04152a;
    border-left: 1px solid #1883d7;
    border-bottom: 1px solid #1883d7;
    font-family: "Open Sans", "Noto Sans", sans-serif;
    font-size: 11px;
    color: #000;
}
button, input, select {
    font: inherit;
    color: inherit;
    margin: 0;
    padding: 0;
    border: 0;
    background: none;
}
select {
    appearance: none;
    flex: 1;
    min-width: 0;
    height: 100%;
}
svg {
    display: block;
    flex: none;
}
.sprite {
    position: absolute;
    width: 0;
    height: 0;
}
.ico {
    width: 18px;
    height: 18px;
}
.ico16 {
    width: 16px;
    height: 16px;
}

/* Title and menu */
.titlebar {
    flex: 0 0 30px;
    display: flex;
    align-items: center;
    background: #fff;
    border-top: 1px solid #1883d7;
    padding-left: 7px;
}
.title {
    flex: 1;
    padding-left: 4px;
}
.win-btn {
    width: 46px;
    height: 29px;
    display: flex;
    align-items: center;
    justify-content: center;
}
.win-btn svg {
    width: 12px;
    height: 12px;
}
.menubar {
    flex: 0 0 20px;
    display: flex;
    align-items: center;
}
.menubar button {
    padding: 0 8px;
}
.mdi {
    width: 16px;
    height: 12px;
}
.license {
    margin-left: auto;
    padding-right: 8px;
}
.menubar .mdi-btn {
    width: 17px;
    height: 18px;
    padding: 0;
    margin-left: 1px;
    display: flex;
    align-items: center;
    justify-content: center;
    background: #fff;
    border: 1px solid #dcdcdc;
    color: #6a7f94;
}
.mdi-btn svg {
    width: 10px;
    height: 10px;
}

/* Toolbars */
.toolbar {
    flex: 0 0 28px;
    display: flex;
    align-items: center;
    border-top: 1px solid #e2e2e2;
}
.tb {
    flex: none;
    width: 26px;
    height: 24px;
    display: flex;
    align-items: center;
    justify-content: center;
    border: 1px solid transparent;
}
.tb.on, .drop.on {
    background: #cbe4f9;
    border: 1px solid #90c8f6;
}
.drop {
    flex: none;
    width: 12px;
    height: 24px;
    display: flex;
    align-items: center;
    justify-content: center;
}
.drop::before {
    content: "";
    border: 4px solid transparent;
    border-top-color: #222;
    border-bottom: 0;
}
.drop.off::before {
    border-top-color: #777;
}
.sep {
    flex: none;
    width: 1px;
    height: 18px;
    margin: 0 3px;
    background: #dadada;
}
.grip {
    flex: none;
    width: 11px;
    height: 27px;
    border-left: 1px solid #dadada;
    padding: 5px 0 5px 4px;
}
.grip::before {
    content: "";
    display: block;
    width: 2px;
    height: 100%;
    background: repeating-linear-gradient(#bdbdbd 0 2px, transparent 2px 4px);
}
.grip.first {
    width: 9px;
    border-left: 0;
}
.overflow {
    flex: none;
    width: 14px;
    font-size: 14px;
    line-height: 24px;
    color: #444;
}
.overflow.wide {
    width: 23px;
    padding-left: 8px;
}
.combo {
    flex: none;
    display: flex;
    align-items: center;
    height: 21px;
    background: #e8e8f3;
}
.combo-ds {
    width: 133px;
    margin: 0 1px;
    padding: 0 4px 0 5px;
}
.badge {
    width: 30px;
    line-height: 13px;
    margin-right: 5px;
    background: #cd6a69;
    color: #fff;
    text-align: center;
}
.more {
    width: 20px;
    height: 15px;
    line-height: 13px;
    border-left: 1px solid #fff;
}
.chev {
    width: 12px;
    height: 12px;
    color: #444;
}
.step {
    flex: none;
    width: 15px;
    height: 21px;
    margin-right: 1px;
    background: #e8e8f3;
    display: flex;
    align-items: center;
    justify-content: center;
}
.step svg {
    width: 12px;
    height: 12px;
}
.step.dim {
    background: #cfcfcf;
}
.combo-cs {
    width: 120px;
    padding: 0 3px 0 5px;
}
.swatch {
    width: 11px;
    height: 11px;
    margin-right: 5px;
    background: #ccffff;
}

/* Workspace */
.workspace {
    flex: 1;
    min-height: 0;
    position: relative;
    display: flex;
    gap: 4px;
    margin-top: 1px;
    padding-left: 1px;
}
.panel-head {
    flex: 0 0 20px;
    display: flex;
    align-items: center;
    background: #d8e6f3;
    padding: 0 1px 0 5px;
    color: #3c3c3c;
}
.panel-head h2 {
    flex: 1;
    margin: 0;
    font-size: 12px;
    font-weight: 600;
}
.panel-head button {
    width: 21px;
    display: flex;
    justify-content: center;
}
.panel-head svg {
    width: 11px;
    height: 11px;
}
.navigator {
    flex: 0 0 281px;
    display: flex;
    flex-direction: column;
    gap: 2px;
    padding-bottom: 2px;
}
.nav-box {
    flex: 1;
    min-height: 0;
    display: flex;
    flex-direction: column;
    border: 1px solid #c5c5d3;
}
.nav-select {
    flex: 0 0 34px;
    display: flex;
    padding: 3px 3px 0 3px;
}
.combo-nav {
    flex: 1;
    padding: 0 3px 0 4px;
}
.combo-nav .ico {
    width: 15px;
    height: 15px;
    margin-right: 5px;
}
.nav-select .step {
    margin: 0 0 0 1px;
}
.tree {
    background: #fff;
    overflow: hidden;
}
.tree-main {
    flex: 1;
}
.row {
    display: flex;
    align-items: center;
    height: 18px;
    padding-left: 5px;
    white-space: nowrap;
}
.row.sub {
    padding-left: 42px;
}
.row small {
    font-size: 10px;
    color: #445;
    vertical-align: -1px;
}
.row .ico16 {
    margin: 0 5px;
}
.tw {
    width: 12px;
    height: 12px;
    margin-right: 5px;
}
.row input {
    appearance: none;
    flex: none;
    width: 13px;
    height: 13px;
    border: 1px solid #333;
    background: #fff;
}
.row input[type="radio"] {
    border-radius: 50%;
}
.row input[type="radio"]:checked::before {
    content: "";
    display: block;
    width: 7px;
    height: 7px;
    margin: 2px;
    border-radius: 50%;
    background: #333;
}
.row input[type="checkbox"]:checked::before {
    content: "";
    display: block;
    width: 9px;
    height: 5px;
    margin: 2px 1px;
    border-left: 1px solid #333;
    border-bottom: 1px solid #333;
    transform: rotate(-45deg);
}
.row input.part {
    background: #cce4f7;
    border-color: #0055a0;
}
.tree-options {
    flex: 0 0 231px;
    min-height: 0;
    height: 231px;
    display: flex;
    padding-top: 6px;
    padding-right: 1px;
}
.tree-options .tree {
    flex: 1;
}
.scrollbar {
    flex: 0 0 16px;
    display: flex;
    flex-direction: column;
    align-items: stretch;
    background: #f0f0f0;
}
.scrollbar button {
    height: 17px;
    display: flex;
    align-items: center;
    justify-content: center;
}
.scrollbar svg {
    width: 11px;
    height: 11px;
}
.thumb {
    height: 177px;
    margin-bottom: auto;
    background: #cdcdcd;
}
.tabs {
    flex: 0 0 26px;
    display: flex;
    align-items: flex-start;
    border-top: 1px solid #c5c5d3;
}
.tab {
    width: 38px;
    height: 23px;
    display: flex;
    align-items: center;
    justify-content: center;
    background: #ececec;
    border: 1px solid #c5c5d3;
    border-width: 0 1px 1px 0;
}
.tab.active {
    height: 25px;
    background: #fff;
}

/* Model view */
.viewport {
    flex: 1;
    position: relative;
    margin-bottom: 2px;
    background: #fff;
    overflow: hidden;
}
.info, .extremes {
    position: absolute;
    left: 5px;
    line-height: 17px;
}
.info {
    top: 4px;
}
.extremes {
    bottom: 3px;
}
.scene {
    width: 100%;
    height: 100%;
}
.axis-text {
    font-size: 11px;
}

/* Control panel */
.control {
    flex: 0 0 267px;
    display: flex;
    flex-direction: column;
    gap: 2px;
    padding-bottom: 2px;
}
.control-box {
    flex: 1;
    display: flex;
    flex-direction: column;
    border-left: 1px solid #c5c5d3;
    border-top: 1px solid #c5c5d3;
}
.control-title {
    margin: 0;
    height: 41px;
    padding: 4px 10px 0;
    line-height: 13px;
    background: #fff;
}
.factors {
    flex: 1;
    background: linear-gradient(90deg, #e1e1e1 19px, #fff 19px);
}
.factors table {
    width: 100%;
    border-collapse: collapse;
    table-layout: fixed;
}
.c-gut {
    width: 19px;
}
.c-name {
    width: 157px;
}
.c-val {
    width: 68px;
}
.factors tr {
    height: 16px;
}
.factors td, .factors th {
    padding: 0;
    height: 16px;
    line-height: 16px;
    font-weight: 400;
    text-align: left;
}
.factors th {
    padding-left: 4px;
}
.group {
    background: #e1e1e1;
}
.factors .gut {
    background: linear-gradient(#bbb, #bbb) 9px 0 / 1px 100% no-repeat;
}
.factors .gut.end {
    background: none;
}
.minus {
    display: block;
    width: 9px;
    height: 9px;
    margin-left: 5px;
    border: 1px solid #777;
    background: linear-gradient(#555, #555) center / 5px 1px no-repeat #fff;
}
.factors .name {
    padding-left: 24px;
    position: relative;
    background: #fafaf3;
    border-right: 1px solid #dcdcdc;
    white-space: nowrap;
}
.name::before {
    content: "";
    position: absolute;
    left: 10px;
    top: 0;
    width: 11px;
    height: 8px;
    border-left: 1px dotted #aaa;
    border-bottom: 1px dotted #aaa;
}
.name:not(.last)::after {
    content: "";
    position: absolute;
    left: 10px;
    top: 8px;
    height: 8px;
    border-left: 1px dotted #aaa;
}
.factors .val {
    padding-right: 3px;
    text-align: right;
    background: #fff;
    border-right: 1px solid #dcdcdc;
}
.factors .val.edit {
    padding: 0 1px;
}
.val input {
    display: block;
    width: 100%;
    height: 14px;
    padding-right: 1px;
    text-align: right;
    border: 1px dotted #000;
}
.factors .mark {
    padding-left: 5px;
    background: #fafaf3;
}
.mark i {
    display: block;
    width: 7px;
    border: 4px solid transparent;
    border-right: 7px solid #f00;
    border-left: 0;
}
.callouts {
    position: absolute;
    top: 0;
    right: 0;
    width: 450px;
    height: 792px;
    z-index: 2;
    pointer-events: none;
}

/* Status bar */
.status {
    flex: 0 0 22px;
    display: flex;
    align-items: stretch;
    padding: 2px 0;
}
.snaps {
    display: flex;
    gap: 2px;
    margin-left: 377px;
}
.snaps button {
    padding: 0 3px;
    border: 1px solid transparent;
    border-right: 1px solid #d0d0d0;
}
.snaps .in {
    background: #ececec;
    border-top-color: #c8c8c8;
    border-left-color: #c8c8c8;
}
.cell {
    width: 76px;
    padding-left: 4px;
    line-height: 18px;
    border-left: 1px solid #d6d6d6;
    white-space: nowrap;
}
.cell.grow {
    flex: 1;
    border-left: 0;
}
.cell.blank {
    width: 106px;
}
.cell.cs {
    width: 156px;
}
.cell.plane {
    width: 66px;
}
.cell.size {
    width: 18px;
    display: flex;
    align-items: flex-end;
}
.size svg {
    width: 10px;
    height: 10px;
}
```
